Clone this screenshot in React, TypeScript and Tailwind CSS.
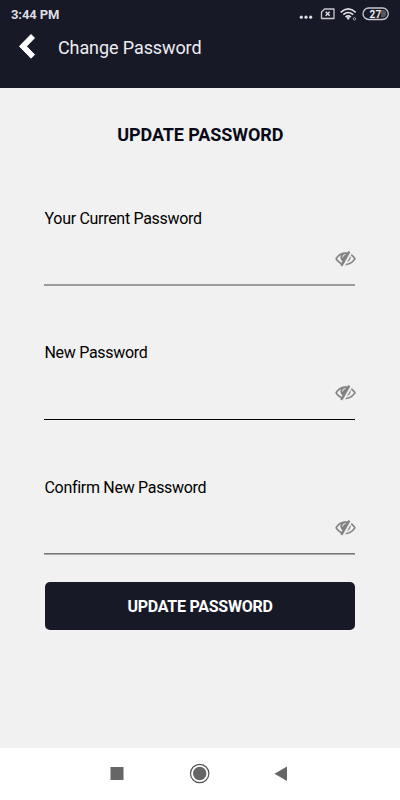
import { FC } from 'react';

interface PasswordFieldProps {
  label: string;
  lineClass: string;
}

const EyeSlashIcon: FC = () => (
  <svg className="h-5 w-5 text-[#808080]" viewBox="-45 0 1792 1792" fill="currentColor" stroke="currentColor" strokeWidth="20" overflow="visible">
    <path d="M555 1335l78-141q-87-63-136-159t-49-203q0-121 61-225-229 117-381 353 167 258 427 375zm389-759q0-20-14-34t-34-14q-125 0-214.500 89.500t-89.500 214.500q0 20 14 34t34 14 34-14 14-34q0-86 61-147t147-61q20 0 34-14t14-34zm363-191q0 7-1 9-105 188-315 566t-316 567l-49 89q-10 16-28 16-12 0-134-70-16-10-16-28 0-12 44-87-143-65-263.500-173t-208.500-245q-20-31-20-69t20-69q153-235 380-371t496-136q89 0 180 17l54-97q10-16 28-16 5 0 18 6t31 15.500 33 18.500 31.500 18.500 19.500 11.500q16 10 16 27zm37 447q0 139-79 253.500t-209 164.500l280-502q8 45 8 84zm448 128q0 35-20 69-39 64-109 145-150 172-347.500 267t-419.500 95l74-132q212-18 392.500-137t301.500-307q-115-179-282-294l63-112q95 64 182.500 153t144.500 184q20 34 20 69z" />
  </svg>
);

const PasswordField: FC<PasswordFieldProps> = ({ label, lineClass }) => (
  <div className="flex h-[134.4px] flex-col">
    <label className="h-5 pl-[0.5px] text-[16px] leading-[21px] tracking-[-0.3px] text-black">{label}</label>
    <div className="mt-5 flex h-[36.4px] justify-end">
      <EyeSlashIcon />
    </div>
    <div className={lineClass} />
  </div>
);

const StatusBar: FC = () => (
  <div className="flex h-7 items-center justify-between px-[11px] text-[#dedee2]">
    <span className="pt-px text-[13px] font-bold leading-7 tracking-[-0.1px]">3:44 PM</span>
    <svg className="h-7 w-[90px]" viewBox="299 0 90 28" fill="none">
      <g fill="#dedee2">
        <circle cx="301.300" cy="17.200" r="1.600" />
        <circle cx="306" cy="17.200" r="1.600" />
        <circle cx="310.700" cy="17.200" r="1.600" />
      </g>
      <path d="M324.500 9H334V18.500H321.500V12Z" stroke="#c9c9ce" strokeWidth="1.300" strokeLinejoin="round" />
      <path d="M325.700 11.700L329.700 15.700M329.700 11.700L325.700 15.700" stroke="#dedee2" strokeWidth="1.500" />
      <g stroke="#dedee2" strokeWidth="1.600">
        <path d="M340.700 12.300Q348.200 5.600 355.700 12.300" />
        <path d="M343.300 14.700Q348.200 10.300 353.200 14.700" />
        <path d="M345.500 17Q348.200 14.700 351 17" />
      </g>
      <path d="M346.200 17.600Q348.200 16.200 350.200 17.600L348.200 20Z" fill="#dedee2" />
      <circle cx="354.500" cy="18.800" r="1.200" stroke="#a9a9b0" />
      <rect x="363" y="8" width="25.300" height="11.500" rx="5.750" stroke="#c9c9ce" strokeWidth="1.300" />
      <path d="M381 10H382.500A3.750 3.750 0 0 1 382.500 17.500H381Z" fill="#555560" />
      <text x="369.500" y="17.500" fontSize="10" fontWeight="700" fill="#eeeeef" letterSpacing="0.200">27</text>
    </svg>
  </div>
);

export default function App() {
  return (
    <div className="flex h-[800px] w-[400px] flex-col overflow-hidden bg-[#f1f1f1] font-['Roboto',sans-serif]">
      <header className="h-[88px] shrink-0 bg-[#171927]">
        <StatusBar />
        <div className="flex h-10 items-center">
          <button className="ml-[18px] flex h-7 w-5 items-center" aria-label="Back">
            <svg className="h-7 w-5" viewBox="18 34 20 28" fill="white" stroke="white" strokeWidth="1" strokeLinejoin="round">
              <path d="M31 34.500L34.500 38L26.500 46.300L34.500 54.700L31 58.200L19.500 46.300Z" />
            </svg>
          </button>
          <h1 className="ml-5 text-[18px] leading-6 tracking-[-0.1px] text-[#ededf0]">Change Password</h1>
        </div>
      </header>

      <main className="flex-1 pl-11 pr-[45px]">
        <h2 className="mt-[35px] pl-[1.5px] text-center text-[18px] font-bold leading-6 tracking-[-0.1px] text-[#090a18]">
          UPDATE PASSWORD
        </h2>
        <form className="mt-[61px] flex flex-col">
          <PasswordField label="Your Current Password" lineClass="h-[2px] bg-[#9c9c9c]" />
          <PasswordField label="New Password" lineClass="h-px bg-black" />
          <PasswordField label="Confirm New Password" lineClass="h-[2px] border-t border-[#777] bg-[#aaa]" />
          <button
            type="button"
            className="-mt-[29px] ml-[0.6px] -mr-[0.4px] h-[48px] rounded-[5px] bg-[#171927] pt-0.5 text-[16px] font-bold tracking-[-0.25px] text-white"
          >
            UPDATE PASSWORD
          </button>
        </form>
      </main>

      <nav className="flex h-[52px] shrink-0 items-center justify-center bg-white">
        <svg className="h-[52px] w-[200px]" viewBox="100 748 200 52" fill="#666">
          <rect x="110.500" y="767" width="13" height="13" />
          <circle cx="199.700" cy="773.500" r="9.200" fill="none" stroke="#555" strokeWidth="1.200" />
          <circle cx="199.700" cy="773.500" r="6.700" />
          <path d="M274.500 773.700L287 766.500V781Z" />
        </svg>
      </nav>
    </div>
  );
}
